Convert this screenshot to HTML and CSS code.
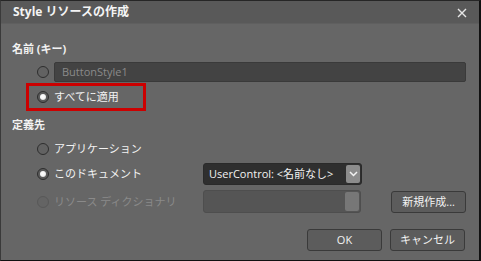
FILE: index.html
```html
<!DOCTYPE html>
<html lang="ja">
<head>
<meta charset="utf-8">
<title>Style リソースの作成</title>
<link rel="stylesheet" href="styles.css">
</head>
<body>
<div class="dialog">
  <div class="titlebar">
    <span class="title">Style リソースの作成</span>
    <svg class="close" width="10" height="10" viewBox="0 0 10 10"><path d="M1 1 L9 9 M9 1 L1 9" stroke="#e6e6e6" stroke-width="1.4" fill="none"/></svg>
  </div>
  <div class="content">
    <div class="heading heading-name">名前 (キー)</div>
    <div class="row row-key">
      <span class="radio"></span>
      <div class="textbox">ButtonStyle1</div>
    </div>
    <div class="row row-all">
      <span class="radio checked"></span>
      <span class="label">すべてに適用</span>
    </div>
    <div class="heading heading-target">定義先</div>
    <div class="row row-app">
      <div class="opt"><span class="radio"></span><span class="label">アプリケーション</span></div>
    </div>
    <div class="row row-doc">
      <div class="opt"><span class="radio checked"></span><span class="label">このドキュメント</span></div>
      <div class="combo">
        <span class="combo-text">UserControl: &lt;名前なし&gt;</span>
        <span class="combo-arrow"><svg width="9" height="6" viewBox="0 0 9 6"><path d="M1 1 L4.5 4.5 L8 1" stroke="#f2f2f2" stroke-width="1.5" fill="none"/></svg></span>
      </div>
    </div>
    <div class="row row-dict">
      <div class="opt disabled"><span class="radio"></span><span class="label">リソース ディクショナリ</span></div>
      <div class="combo combo-disabled"><span class="combo-thumb"></span></div>
      <button class="btn btn-new">新規作成...</button>
    </div>
    <div class="row row-actions">
      <button class="btn">OK</button>
      <button class="btn">キャンセル</button>
    </div>
  </div>
</div>
</body>
</html>
```
FILE: styles.css
```css
html, body {
  margin: 0;
  padding: 0;
  background: #666666;
}
.dialog {
  box-sizing: border-box;
  width: 481px;
  height: 261px;
  background: #666666;
  border-top: 1px solid #262626;
  border-left: 1px solid #3a3a3a;
  border-right: 2px solid #111111;
  border-bottom: 1px solid #111111;
  font-family: "Open Sans", "Noto Sans CJK JP", sans-serif;
  font-size: 11px;
  color: #f2f2f2;
}
.titlebar {
  height: 23px;
  background: #595959;
  border-bottom: 1px solid #5f5f5f;
  box-sizing: border-box;
  display: flex;
  align-items: center;
  justify-content: space-between;
  padding: 0 12px 0 12px;
}
.title {
  font-size: 12px;
  font-weight: bold;
  color: #f4f4f4;
  line-height: 16px;
}
.close {
  display: block;
  margin-top: 2px;
}
.content {
  padding: 0 13px 0 11px;
  display: flex;
  flex-direction: column;
}
.heading {
  font-weight: bold;
  line-height: 16px;
  height: 16px;
  font-size: 11px;
  color: #f2f2f2;
}
.heading-name { margin-top: 17px; }
.heading-target { margin-top: 6px; }
.row {
  display: flex;
  align-items: center;
}
.label {
  line-height: 16px;
  white-space: nowrap;
}
.radio {
  box-sizing: border-box;
  width: 12px;
  height: 12px;
  border-radius: 50%;
  border: 1px solid #2e2e2e;
  background: #626262;
  display: inline-flex;
  align-items: center;
  justify-content: center;
  margin-right: 5px;
  flex: none;
}
.radio.checked {
  background: #5a5a5a;
}
.radio.checked::after {
  content: "";
  width: 6px;
  height: 6px;
  border-radius: 50%;
  background: radial-gradient(circle at 45% 40%, #ffffff 0%, #f4f4f4 50%, #bdbdbd 100%);
}
.row-key {
  margin-top: 5px;
  height: 20px;
  padding-left: 25px;
}
.textbox {
  flex: 1;
  box-sizing: border-box;
  height: 20px;
  background: #434343;
  border: 1px solid #3a3a3a;
  border-radius: 2px;
  color: #8a8a8a;
  line-height: 18px;
  padding-left: 7px;
}
.row-all {
  box-sizing: border-box;
  width: 120px;
  height: 28px;
  margin-left: 14px;
  margin-top: 1px;
  border: 3px solid #cc0000;
  padding-left: 8px;
}
.opt {
  width: 166px;
  padding-left: 25px;
  display: flex;
  align-items: center;
  flex: none;
}
.opt.disabled .label { color: #8a8a8a; }
.opt.disabled .radio { border-color: #585858; background: #646464; }
.row-app {
  margin-top: 6px;
  height: 20px;
}
.row-doc {
  margin-top: 4px;
  height: 22px;
}
.combo {
  box-sizing: border-box;
  width: 159px;
  height: 22px;
  background: #2f2f2f;
  border: 1px solid #2a2a2a;
  border-radius: 3px;
  display: flex;
  align-items: center;
  justify-content: space-between;
  padding: 0 1px 0 5px;
}
.combo-text {
  color: #f2f2f2;
  white-space: nowrap;
  line-height: 16px;
}
.combo-arrow {
  box-sizing: border-box;
  width: 14px;
  height: 18px;
  background: #8c8c8c;
  border-radius: 2px;
  display: flex;
  align-items: center;
  justify-content: center;
}
.row-dict {
  margin-top: 5px;
  height: 23px;
}
.combo-disabled {
  height: 23px;
  background: #555555;
  border-color: #4e4e4e;
  justify-content: flex-end;
}
.combo-thumb {
  width: 14px;
  height: 19px;
  border-radius: 2px;
  background: #777777;
}
.btn {
  box-sizing: border-box;
  width: 75px;
  height: 22px;
  background: #5c5c5c;
  border: 1px solid #3a3a3a;
  border-radius: 3px;
  color: #f2f2f2;
  font-family: inherit;
  font-size: 11px;
  padding: 0;
  line-height: 18px;
}
.btn-new {
  margin-left: 30px;
}
.row-actions {
  margin-top: 16px;
  justify-content: flex-end;
  gap: 8px;
  padding-right: 1px;
}
```
